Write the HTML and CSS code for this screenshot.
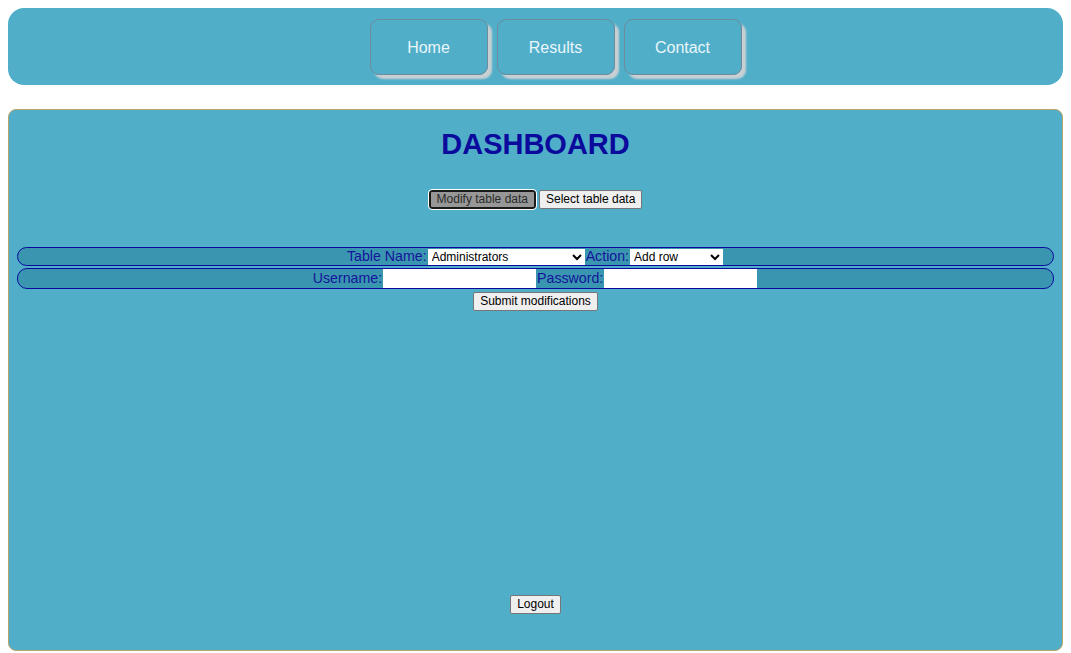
FILE: index.html
```html
<!DOCTYPE html>
<html>
<head>
<meta charset="utf-8">
<link rel="stylesheet" href="styles.css">
</head>
<body>
<nav class="navbar">
  <a class="nav-btn" href="#">Home</a>
  <a class="nav-btn" href="#">Results</a>
  <a class="nav-btn" href="#">Contact</a>
</nav>
<main class="panel">
  <h1 class="title">DASHBOARD</h1>
  <div class="mode-btns">
    <button class="btn btn-active">Modify table data</button>
    <button class="btn">Select table data</button>
  </div>
  <form class="mod-form">
    <div class="row">
      <label>Table Name:</label><select class="sel-table"><option>Administrators</option></select><label>Action:</label><select class="sel-action"><option>Add row</option></select>
    </div>
    <div class="row">
      <label>Username:</label><input class="txt" type="text"><label>Password:</label><input class="txt" type="password">
    </div>
    <div class="submit-wrap"><button class="btn" type="button">Submit modifications</button></div>
  </form>
  <div class="logout-wrap"><button class="btn">Logout</button></div>
</main>
</body>
</html>
```
FILE: styles.css
```css
html, body {
  margin: 0;
  padding: 0;
  background: #ffffff;
}
body {
  padding: 8px 8px 0 8px;
  font-family: "Liberation Sans", Arial, sans-serif;
}
.navbar {
  background: #50aec9;
  border-radius: 16px;
  height: 77px;
  display: flex;
  justify-content: center;
  align-items: flex-start;
  gap: 9px;
  padding: 11px 0 0 40px;
  box-sizing: border-box;
}
.nav-btn {
  width: 118px;
  height: 56px;
  box-sizing: border-box;
  border: 1px solid #6c8c9c;
  border-radius: 9px;
  box-shadow: 4px 4px 2px #c8d0d4;
  color: #eaf6fa;
  text-decoration: none;
  font-size: 16px;
  display: flex;
  align-items: center;
  justify-content: center;
  padding-top: 2px;
}
.panel {
  margin-top: 24px;
  background: #50aec9;
  border: 1px solid #b9a46a;
  border-radius: 8px;
  height: 542px;
  box-sizing: border-box;
  display: flex;
  flex-direction: column;
  align-items: stretch;
  padding: 0 8px;
}
.title {
  margin: 17px 0 0 0;
  text-align: center;
  color: #0a0a9c;
  font-size: 29px;
  font-weight: bold;
  line-height: 34px;
}
.mode-btns {
  margin-top: 29px;
  display: flex;
  justify-content: center;
  gap: 3px;
}
.btn {
  font-family: "Liberation Sans", Arial, sans-serif;
  font-size: 12px;
  background: #efefef;
  border: 1px solid #767676;
  border-radius: 2px;
  padding: 1px 6px;
  height: 19px;
  line-height: 15px;
  color: #000;
}
.btn-active {
  background: #979797;
  border: 2px solid #1a1a1a;
  outline: 1px solid #ffffff;
  border-radius: 3px;
  padding: 0 6px;
  color: #2a2a2a;
}
.mod-form {
  margin-top: 38px;
  display: flex;
  flex-direction: column;
  gap: 2px;
}
.row {
  background: #3a96b0;
  border: 1px solid #0a0a9c;
  border-radius: 10px;
  display: flex;
  justify-content: center;
  align-items: center;
  height: 19px;
  box-sizing: border-box;
  color: #14149a;
  font-size: 14.2px;
}
.row + .row {
  height: 21px;
}
.row label {
  line-height: 17px;
}
.sel-table, .sel-action {
  font-family: "Liberation Sans", Arial, sans-serif;
  font-size: 12px;
  height: 16px;
  border: none;
  background: #ffffff;
  padding: 0;
  margin: 0 1px;
  color: #000;
}
.sel-table { width: 157px; }
.sel-action { width: 93px; }
.txt {
  width: 153px;
  height: 19px;
  box-sizing: border-box;
  border: none;
  padding: 0;
  margin: 0 1px;
  background: #fff;
}
.submit-wrap {
  display: flex;
  justify-content: center;
  margin-top: 1px;
}
.logout-wrap {
  margin-top: auto;
  margin-bottom: 36px;
  display: flex;
  justify-content: center;
}
```
